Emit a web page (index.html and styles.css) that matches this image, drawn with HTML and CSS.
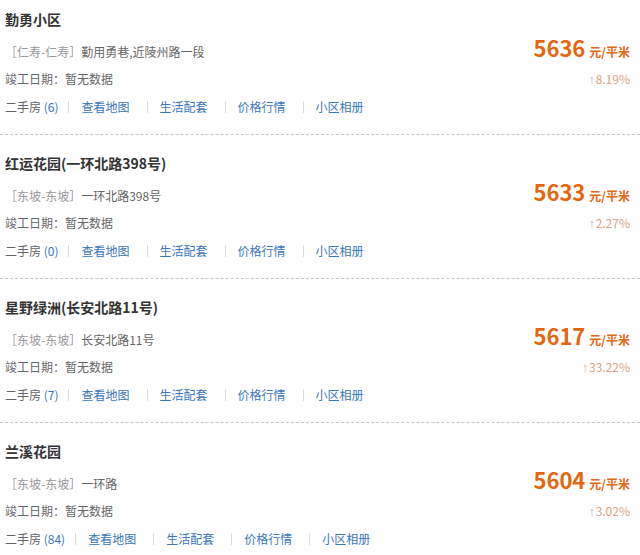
FILE: index.html
```html
<!DOCTYPE html>
<html lang="zh-CN">
<head>
<meta charset="utf-8">
<title>小区列表</title>
<link rel="stylesheet" href="styles.css">
</head>
<body>
<div class="list">
  <div class="item">
    <div class="title">勤勇小区</div>
    <div class="row">
      <div class="addr"><span class="area">［仁寿-仁寿］</span>勤用勇巷,近陵州路一段</div>
      <div class="price"><span class="num">5636</span><span class="unit">元/平米</span></div>
    </div>
    <div class="row">
      <div class="date">竣工日期：暂无数据</div>
      <div class="change"><span class="arrow">↑</span>8.19%</div>
    </div>
    <div class="row links">
      <span class="esf">二手房 <a class="lk">(6)</a></span><i class="sep first"></i><a class="lk">查看地图</a><i class="sep"></i><a class="lk">生活配套</a><i class="sep"></i><a class="lk">价格行情</a><i class="sep"></i><a class="lk">小区相册</a>
    </div>
  </div>
  <div class="item">
    <div class="title">红运花园(一环北路398号)</div>
    <div class="row">
      <div class="addr"><span class="area">［东坡-东坡］</span>一环北路398号</div>
      <div class="price"><span class="num">5633</span><span class="unit">元/平米</span></div>
    </div>
    <div class="row">
      <div class="date">竣工日期：暂无数据</div>
      <div class="change"><span class="arrow">↑</span>2.27%</div>
    </div>
    <div class="row links">
      <span class="esf">二手房 <a class="lk">(0)</a></span><i class="sep first"></i><a class="lk">查看地图</a><i class="sep"></i><a class="lk">生活配套</a><i class="sep"></i><a class="lk">价格行情</a><i class="sep"></i><a class="lk">小区相册</a>
    </div>
  </div>
  <div class="item">
    <div class="title">星野绿洲(长安北路11号)</div>
    <div class="row">
      <div class="addr"><span class="area">［东坡-东坡］</span>长安北路11号</div>
      <div class="price"><span class="num">5617</span><span class="unit">元/平米</span></div>
    </div>
    <div class="row">
      <div class="date">竣工日期：暂无数据</div>
      <div class="change"><span class="arrow">↑</span>33.22%</div>
    </div>
    <div class="row links">
      <span class="esf">二手房 <a class="lk">(7)</a></span><i class="sep first"></i><a class="lk">查看地图</a><i class="sep"></i><a class="lk">生活配套</a><i class="sep"></i><a class="lk">价格行情</a><i class="sep"></i><a class="lk">小区相册</a>
    </div>
  </div>
  <div class="item">
    <div class="title">兰溪花园</div>
    <div class="row">
      <div class="addr"><span class="area">［东坡-东坡］</span>一环路</div>
      <div class="price"><span class="num">5604</span><span class="unit">元/平米</span></div>
    </div>
    <div class="row">
      <div class="date">竣工日期：暂无数据</div>
      <div class="change"><span class="arrow">↑</span>3.02%</div>
    </div>
    <div class="row links">
      <span class="esf">二手房 <a class="lk">(84)</a></span><i class="sep first"></i><a class="lk">查看地图</a><i class="sep"></i><a class="lk">生活配套</a><i class="sep"></i><a class="lk">价格行情</a><i class="sep"></i><a class="lk">小区相册</a>
    </div>
  </div>
</div>
</body>
</html>
```

FILE: styles.css
```css
html, body {
  margin: 0;
  padding: 0;
  background: #fff;
}
body {
  font-family: "Noto Sans CJK SC", "Noto Sans", sans-serif;
  font-size: 12px;
  color: #666;
}
.list {
  width: 640px;
}
.item {
  padding: 16px 10px 13px 5px;
  border-bottom: 1px dashed #c8c8c8;
}
.item:first-child {
  padding-top: 7px;
}
.title {
  font-size: 14px;
  font-weight: bold;
  color: #333;
  line-height: 24px;
  height: 24px;
  margin-bottom: 6px;
}
.row {
  display: flex;
  justify-content: space-between;
  align-items: baseline;
  line-height: 28px;
  height: 28px;
}
.area {
  color: #999;
}
.addr {
  color: #666;
}
.price {
  color: #e5660f;
  font-weight: bold;
  line-height: 20px;
}
.num {
  font-size: 22px;
}
.unit {
  font-size: 12px;
  margin-left: 4px;
}
.change {
  color: #dba287;
  font-size: 12px;
}
.arrow {
  font-family: "Liberation Sans", sans-serif;
  margin-right: 1px;
}
.links {
  justify-content: flex-start;
  align-items: center;
}
.lk {
  color: #3a76b8;
  text-decoration: none;
}
.esf {
  color: #666;
}
.sep {
  display: inline-block;
  width: 1px;
  height: 12px;
  background: #dcdcdc;
  margin: 0 12px 0 17px;
}
.sep.first {
  margin-left: 10px;
}
```
